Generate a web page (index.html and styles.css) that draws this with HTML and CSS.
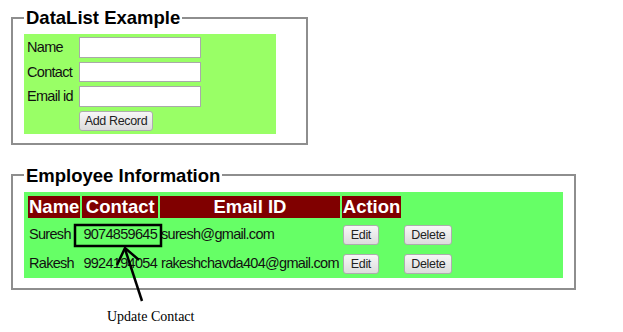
FILE: index.html
```html
<!DOCTYPE html>
<html>
<head>
<meta charset="utf-8">
<title>DataList Example</title>
<link rel="stylesheet" href="styles.css">
</head>
<body>
<div class="page">
  <fieldset class="box box-form">
    <legend>DataList Example</legend>
    <div class="panel panel-form">
      <table class="form-table">
        <tr><td class="lbl">Name</td><td><input type="text"></td></tr>
        <tr><td class="lbl">Contact</td><td><input type="text"></td></tr>
        <tr><td class="lbl">Email id</td><td><input type="text"></td></tr>
        <tr><td></td><td><button class="btn btn-add">Add Record</button></td></tr>
      </table>
    </div>
  </fieldset>

  <fieldset class="box box-list">
    <legend>Employee Information</legend>
    <div class="panel panel-list">
      <table class="emp-table">
        <tr><th>Name</th><th>Contact</th><th>Email ID</th><th>Action</th></tr>
        <tr><td>Suresh</td><td>9074859645</td><td>suresh@gmail.com</td><td><button class="btn">Edit</button></td><td class="del"><button class="btn">Delete</button></td></tr>
        <tr><td>Rakesh</td><td>9924194054</td><td>rakeshchavda404@gmail.com</td><td><button class="btn">Edit</button></td><td class="del"><button class="btn">Delete</button></td></tr>
      </table>
    </div>
  </fieldset>

  <svg class="annot" width="623" height="332" viewBox="0 0 623 332">
    <rect x="75" y="225" width="86" height="21" fill="none" stroke="#000" stroke-width="2.5"/>
    <line x1="142" y1="301" x2="125" y2="249" stroke="#000" stroke-width="2.5"/>
    <polyline points="117,265 125,248 139,260" fill="none" stroke="#000" stroke-width="2.5"/>
  </svg>
  <div class="caption">Update Contact</div>
</div>
</body>
</html>
```

FILE: styles.css
```css
html, body {
  margin: 0;
  background: #fff;
}
body {
  font-family: "Liberation Sans", Arial, sans-serif;
  color: #111;
}
.page {
  position: relative;
  width: 623px;
  height: 332px;
  padding: 7px 0 0 11px;
  box-sizing: border-box;
}
.box {
  border: 2px solid #8e8e8e;
  margin: 0;
  padding: 6px 11px 9px 11px;
  box-sizing: border-box;
}
.box-form {
  width: 297px;
}
.box-list {
  width: 565px;
  margin-top: 20px;
  padding-bottom: 10px;
}
legend {
  font: bold 18.5px/21px "Liberation Sans", Arial, sans-serif;
  color: #000;
  padding: 0 2px;
}
.panel-form {
  background: #99ff66;
  width: 252px;
}
.panel-list {
  background: #66ff66;
  width: 539px;
  padding: 2px 0 0 2px;
  box-sizing: border-box;
}
.form-table {
  border-spacing: 2px;
}
.form-table td {
  padding: 1px;
  font-size: 14.5px;
  letter-spacing: -0.7px;
  line-height: 18px;
  white-space: nowrap;
  vertical-align: middle;
}
.form-table td.lbl {
  padding-right: 3px;
}
.form-table input {
  width: 122px;
  height: 20.5px;
  box-sizing: border-box;
  border: 1px solid #a9a9a9;
  margin: 0;
  padding: 0 2px;
  display: block;
  background: #fff;
}
.btn {
  font-family: "Liberation Sans", Arial, sans-serif;
  font-size: 12.5px;
  letter-spacing: -0.35px;
  height: 20px;
  padding: 0 7px;
  margin: 0;
  border: 1px solid #adadad;
  border-radius: 3px;
  background: linear-gradient(#f7f7f7, #dcdcdc);
  color: #222;
  box-sizing: border-box;
}
.form-table .btn {
  display: block;
  width: 74px;
  padding: 0;
}
.emp-table {
  border-spacing: 2px;
}
.emp-table th {
  background: #800000;
  color: #fff;
  font: bold 18.5px/20px "Liberation Sans", Arial, sans-serif;
  padding: 1px;
  white-space: nowrap;
}
.emp-table td {
  font-size: 14.5px;
  letter-spacing: -0.7px;
  line-height: 18px;
  height: 25px;
  padding: 2px 1px 0 1px;
  white-space: nowrap;
  vertical-align: middle;
}
.emp-table td .btn {
  margin: 1px 0 0 0;
  vertical-align: middle;
}
.emp-table td.del .btn {
  width: 48px;
  padding: 0;
}
.annot {
  position: absolute;
  left: 0;
  top: 0;
  pointer-events: none;
}
.caption {
  position: absolute;
  left: 107px;
  top: 309px;
  font: 14px/16px "Liberation Serif", "Times New Roman", serif;
  color: #000;
}
```
